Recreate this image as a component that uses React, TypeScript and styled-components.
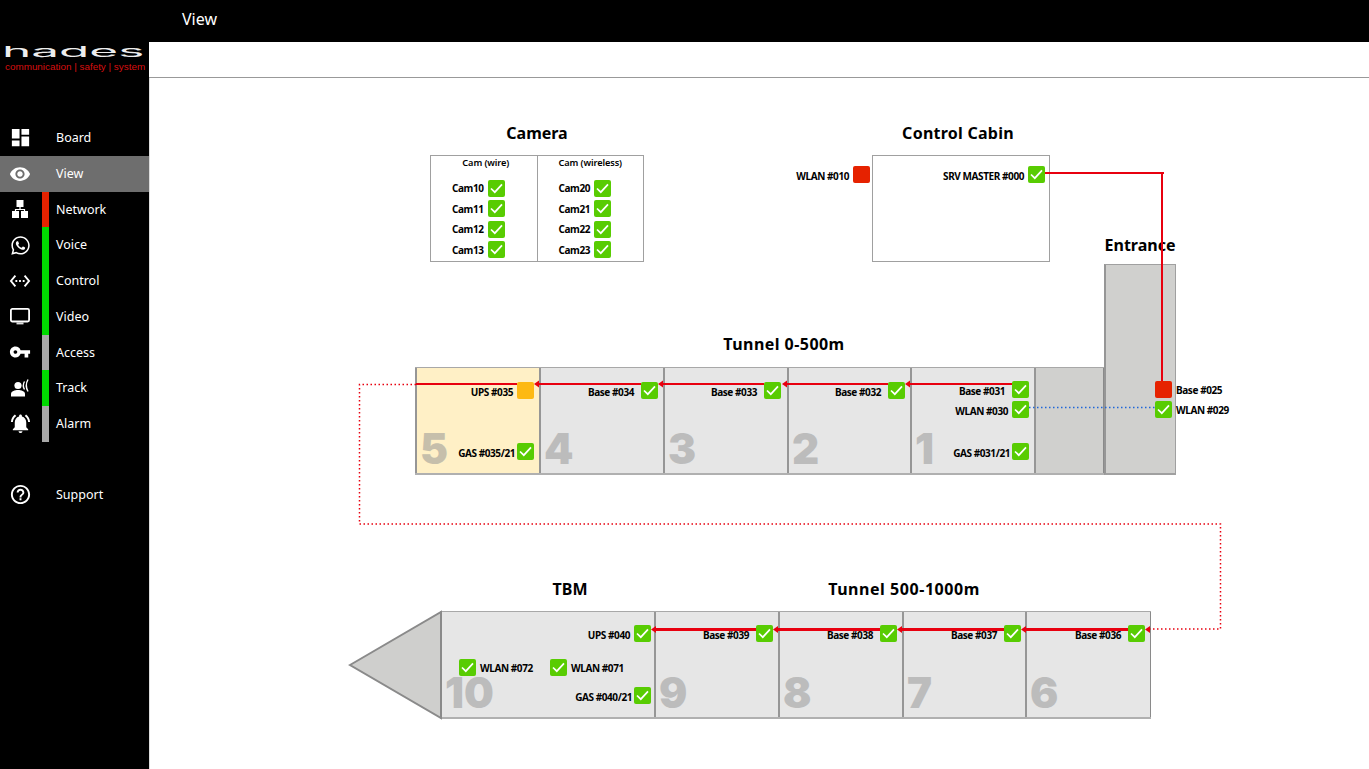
import React from 'react';
import styled, { createGlobalStyle } from 'styled-components';
import {
    MdDashboard,
    MdVisibility,
    MdSettingsEthernet,
    MdVpnKey,
    MdNotificationsActive,
    MdHelpOutline
} from 'react-icons/md';
import { FaWhatsapp } from 'react-icons/fa';

const CANVAS_X = 149;
const CANVAS_Y = 78;
const CANVAS_W = 1220;

const GREEN = '#58cc02';
const RED = '#e62200';
const AMBER = '#fdb913';
const WIRE = '#e8000f';

const GlobalStyle = createGlobalStyle`
    html, body {
        margin: 0;
        height: 100%;
        overflow: hidden;
        background: #fff;
        font-family: "Noto Sans", "Open Sans", sans-serif;
    }
`;

const Page = styled.div`
    display: flex;
    flex-direction: column;
    height: 100vh;
`;

const TopBar = styled.header`
    flex: 0 0 42px;
    background: #000;
    color: #fff;
    font-size: 16px;
    line-height: 38px;
    padding-left: 182px;
`;

const Body = styled.div`
    flex: 1;
    display: flex;
    min-height: 0;
`;

const Sidebar = styled.nav`
    flex: 0 0 149px;
    min-width: 0;
    background: #000;
    border-right: 1px solid #ddd;
    color: #fff;
`;

const Logo = styled.div`
    height: 78px;
    padding: 0 0 0 5px;
    box-sizing: border-box;
    overflow: hidden;
`;

const LogoMark = styled.div`
    font-family: "Inter", sans-serif;
    font-weight: 400;
    font-size: 15px;
    line-height: 16px;
    height: 15px;
    margin: 2px 0 0 -3px;
    color: #eee;
    transform: scale(3.3, 1);
    transform-origin: 0 50%;
`;

const LogoTag = styled.div`
    font-family: "Liberation Sans", Arial, sans-serif;
    font-size: 9.9px;
    line-height: 12px;
    margin-top: 2px;
    color: #d80f0f;
    white-space: nowrap;
`;

const MenuGroup = styled.div<{ $gap?: number }>`
    margin-top: ${props => props.$gap || 0}px;
`;

const MenuRow = styled.div<{ $active?: boolean }>`
    display: flex;
    align-items: stretch;
    height: 35.75px;
    background: ${props => props.$active ? '#6e6e6e' : 'transparent'};
`;

const MenuIcon = styled.div`
    flex: 0 0 42px;
    padding-right: 2px;
    box-sizing: border-box;
    display: flex;
    align-items: center;
    justify-content: center;
`;

const MenuStatus = styled.div<{ $color?: string }>`
    flex: 0 0 7px;
    background: ${props => props.$color || 'transparent'};
`;

const MenuLabel = styled.div`
    padding-left: 7px;
    font-size: 12.5px;
    line-height: 35px;
`;

const Content = styled.main`
    flex: 1;
    display: flex;
    flex-direction: column;
    min-width: 0;
`;

const Strip = styled.div`
    flex: 0 0 36px;
    box-sizing: border-box;
    border-bottom: 1px solid #999;
    margin-left: -1px;
    background: #fff;
`;

const Canvas = styled.div`
    position: relative;
    flex: 1;
    margin-left: -1px;
    color: #000;
`;

const Wires = styled.svg`
    position: absolute;
    left: 0;
    top: 0;
    width: 100%;
    height: 100%;
`;

const Title = styled.h2<{ $cx: number; $y: number; $spread?: number }>`
    position: absolute;
    left: ${props => props.$cx - CANVAS_X}px;
    top: ${props => props.$y - CANVAS_Y}px;
    transform: translate(-50%, -50%);
    margin: 0;
    font-size: 16px;
    line-height: 20px;
    font-weight: 700;
    letter-spacing: ${props => props.$spread || 0}px;
    white-space: nowrap;
`;

const CameraBox = styled.div`
    position: absolute;
    left: ${430 - CANVAS_X}px;
    top: ${155 - CANVAS_Y}px;
    width: 214px;
    height: 107px;
    box-sizing: border-box;
    border: 1px solid #a0a0a0;
    display: flex;
`;

const CameraColumn = styled.div`
    flex: 1;
    display: flex;
    flex-direction: column;
    padding-right: 32px;
    & + & {
        border-left: 1px solid #a0a0a0;
    }
`;

const CameraHead = styled.div<{ $shift: number }>`
    font-size: 9.2px;
    font-weight: 600;
    line-height: 13px;
    letter-spacing: -0.1px;
    margin: 0 -32px 9px ${props => props.$shift}px;
    text-align: center;
`;

const CameraRow = styled.div`
    display: flex;
    justify-content: flex-end;
    align-items: center;
    gap: 4px;
    height: 20.5px;
`;

const Label = styled.span<{ $drop: number }>`
    font-size: 10px;
    font-weight: 700;
    line-height: 12px;
    letter-spacing: -0.42px;
    white-space: nowrap;
    margin-top: ${props => props.$drop}px;
`;

const CabinBox = styled.div`
    position: absolute;
    left: ${872 - CANVAS_X}px;
    top: ${155 - CANVAS_Y}px;
    width: 178px;
    height: 107px;
    box-sizing: border-box;
    border: 1px solid #a0a0a0;
`;

const EntranceTower = styled.div`
    position: absolute;
    left: ${1104 - CANVAS_X}px;
    top: ${264 - CANVAS_Y}px;
    width: 72px;
    height: 211px;
    box-sizing: border-box;
    background: #d0d0ce;
    border: 1px solid #a0a0a0;
    border-bottom-width: 2px;
    border-left: 2px solid #969696;
`;

const CellRow = styled.div<{ $x: number; $y: number }>`
    position: absolute;
    left: ${props => props.$x - CANVAS_X}px;
    top: ${props => props.$y - CANVAS_Y}px;
    display: flex;
    height: 108px;
    box-sizing: border-box;
    border-top: 1px solid #a8a8a8;
    border-bottom: 2px solid #b0b0b0;
`;

const Cell = styled.div<{ $w: number; $bg?: string }>`
    width: ${props => props.$w}px;
    box-sizing: border-box;
    background: ${props => props.$bg || '#e6e6e6'};
    border-left: 2px solid #969696;
    display: flex;
    align-items: flex-end;
    padding: 0 0 9px 3px;
    &:last-child {
        border-right: 1px solid #8a8a8a;
    }
`;

const CellNumber = styled.span<{ $tint?: string }>`
    font-family: "Inter", "Liberation Sans", sans-serif;
    font-weight: 900;
    font-size: 42px;
    line-height: 31px;
    color: ${props => props.$tint || '#bcbcbc'};
`;

const Node = styled.div<{ $x: number; $y: number; $side: 'left' | 'right'; $gap: number }>`
    position: absolute;
    top: ${props => props.$y - CANVAS_Y}px;
    display: flex;
    align-items: center;
    gap: ${props => props.$gap}px;
    ${props => props.$side === 'left'
        ? `right: ${CANVAS_W - (props.$x + 17 - CANVAS_X)}px;`
        : `left: ${props.$x - CANVAS_X}px; flex-direction: row-reverse;`}
`;

const StatusBox = styled.div<{ $color: string }>`
    flex: 0 0 17px;
    width: 17px;
    height: 17px;
    border-radius: 2px;
    background: ${props => props.$color};
    display: flex;
    align-items: center;
    justify-content: center;
`;

const Check = () => (
    <svg width="13" height="11" viewBox="0 0 13 11">
        <path d="M1 5.5 L4.8 9.2 L12 1.4" fill="none" stroke="#fff" strokeWidth="1.7" />
    </svg>
);

const Status: React.FC<{ color?: string }> = ({ color = GREEN }) => (
    <StatusBox $color={color}>{color === GREEN && <Check />}</StatusBox>
);

const NetworkIcon = () => (
    <svg width="18" height="18" viewBox="0 0 18 18" style={{ display: 'block' }}>
        <rect x="5.5" y="0" width="7" height="7" fill="#fff" />
        <rect x="1" y="11" width="7" height="7" fill="#fff" />
        <rect x="10" y="11" width="7" height="7" fill="#fff" />
        <path d="M9 7 V9.5 M4.5 11 V9.5 H13.5 V11" fill="none" stroke="#fff" strokeWidth="1.2" />
    </svg>
);

const MonitorIcon = () => (
    <svg width="20" height="17" viewBox="0 0 20 17" style={{ display: 'block' }}>
        <rect x="0.9" y="0.9" width="18.2" height="12.6" rx="1.5" fill="none" stroke="#fff" strokeWidth="1.8" />
        <rect x="6.5" y="14.4" width="7" height="2" fill="#ddd" />
    </svg>
);

const TrackIcon = () => (
    <svg width="20" height="18" viewBox="0 0 20 18" style={{ display: 'block' }}>
        <circle cx="8" cy="6.5" r="3.6" fill="#fff" />
        <path d="M1 17.5 V15 C1 12 5 11 8 11 C11 11 15 12 15 15 V17.5 Z" fill="#fff" />
        <path d="M14.5 2.5 C13 5 13 8 14.5 10.5" fill="none" stroke="#fff" strokeWidth="1.4" />
        <path d="M18 0.5 C16 4 16 9 18 12.5" fill="none" stroke="#fff" strokeWidth="1.4" />
    </svg>
);

const iconStyle = { display: 'block' };

const menu = [
    { label: 'Board', icon: <MdDashboard size={23} style={iconStyle} /> },
    { label: 'View', icon: <MdVisibility size={22} style={iconStyle} />, active: true },
    { label: 'Network', icon: <NetworkIcon />, status: RED },
    { label: 'Voice', icon: <FaWhatsapp size={21} style={iconStyle} />, status: '#00d800' },
    { label: 'Control', icon: <MdSettingsEthernet size={22} style={iconStyle} />, status: '#00d800' },
    { label: 'Video', icon: <MonitorIcon />, status: '#00d800' },
    { label: 'Access', icon: <MdVpnKey size={22} style={iconStyle} />, status: '#a8a8a8' },
    { label: 'Track', icon: <TrackIcon />, status: '#00d800' },
    { label: 'Alarm', icon: <MdNotificationsActive size={23} style={iconStyle} />, status: '#a8a8a8' }
];

const cameras = [
    { head: 'Cam (wire)', shift: 4, names: ['Cam10', 'Cam11', 'Cam12', 'Cam13'] },
    { head: 'Cam (wireless)', shift: 0, names: ['Cam20', 'Cam21', 'Cam22', 'Cam23'] }
];

interface NodeItem {
    label: string;
    x: number;
    y: number;
    gap?: number;
    side?: 'left' | 'right';
    color?: string;
    drop?: number;
}

const nodes: NodeItem[] = [
    { label: 'WLAN #010', x: 853, y: 166, color: RED, drop: 3 },
    { label: 'SRV MASTER #000', x: 1028, y: 166, drop: 3 },
    { label: 'UPS #035', x: 517, y: 382, color: AMBER },
    { label: 'Base #034', x: 641, y: 382, gap: 7 },
    { label: 'Base #033', x: 764, y: 382, gap: 7 },
    { label: 'Base #032', x: 888, y: 382, gap: 7 },
    { label: 'Base #031', x: 1012, y: 381, gap: 7 },
    { label: 'WLAN #030', x: 1012, y: 401 },
    { label: 'GAS #035/21', x: 517, y: 443, gap: 2 },
    { label: 'GAS #031/21', x: 1012, y: 443, gap: 2 },
    { label: 'Base #025', x: 1155, y: 381, side: 'right', color: RED, drop: 0 },
    { label: 'WLAN #029', x: 1155, y: 401, side: 'right', drop: 0 },
    { label: 'UPS #040', x: 634, y: 625 },
    { label: 'Base #039', x: 756, y: 625, gap: 7 },
    { label: 'Base #038', x: 880, y: 625, gap: 7 },
    { label: 'Base #037', x: 1004, y: 625, gap: 7 },
    { label: 'Base #036', x: 1128, y: 625, gap: 7 },
    { label: 'WLAN #072', x: 459, y: 659, side: 'right', drop: 0 },
    { label: 'WLAN #071', x: 550, y: 659, side: 'right', drop: 0 },
    { label: 'GAS #040/21', x: 634, y: 687, gap: 2 }
];

// arrows run right to left, the head sits on x2
const arrows = [
    { x1: 641, x2: 534, y: 384, w: 2 },
    { x1: 764, x2: 658, y: 384, w: 2 },
    { x1: 888, x2: 782, y: 384, w: 2 },
    { x1: 1012, x2: 905, y: 384, w: 2 },
    { x1: 756, x2: 651, y: 629.5, w: 3 },
    { x1: 880, x2: 773, y: 629.5, w: 3 },
    { x1: 1004, x2: 897, y: 629.5, w: 3 },
    { x1: 1128, x2: 1021, y: 629.5, w: 3 }
];

const App: React.FC = () => {
    return (
        <Page>
            <GlobalStyle />
            <TopBar>View</TopBar>
            <Body>
                <Sidebar>
                    <Logo>
                        <LogoMark>hades</LogoMark>
                        <LogoTag>communication | safety | system</LogoTag>
                    </Logo>
                    <MenuGroup>
                        {menu.map(item => (
                            <MenuRow key={item.label} $active={item.active}>
                                <MenuIcon>{item.icon}</MenuIcon>
                                <MenuStatus $color={item.status} />
                                <MenuLabel>{item.label}</MenuLabel>
                            </MenuRow>
                        ))}
                    </MenuGroup>
                    <MenuGroup $gap={35}>
                        <MenuRow>
                            <MenuIcon><MdHelpOutline size={23} style={iconStyle} /></MenuIcon>
                            <MenuStatus />
                            <MenuLabel>Support</MenuLabel>
                        </MenuRow>
                    </MenuGroup>
                </Sidebar>
                <Content>
                    <Strip />
                    <Canvas>
                        <Title $cx={537} $y={133}>Camera</Title>
                        <Title $cx={958} $y={133} $spread={0.25}>Control Cabin</Title>
                        <Title $cx={1140} $y={245}>Entrance</Title>
                        <Title $cx={784} $y={344} $spread={0.45}>Tunnel 0-500m</Title>
                        <Title $cx={570} $y={589}>TBM</Title>
                        <Title $cx={904} $y={589} $spread={0.55}>Tunnel 500-1000m</Title>

                        <CameraBox>
                            {cameras.map(col => (
                                <CameraColumn key={col.head}>
                                    <CameraHead $shift={col.shift}>{col.head}</CameraHead>
                                    {col.names.map(name => (
                                        <CameraRow key={name}>
                                            <Label $drop={0}>{name}</Label>
                                            <Status />
                                        </CameraRow>
                                    ))}
                                </CameraColumn>
                            ))}
                        </CameraBox>
                        <CabinBox />

                        <EntranceTower />
                        <CellRow $x={415} $y={367}>
                            <Cell $w={124} $bg="#fff0c6"><CellNumber $tint="#c6bfab">5</CellNumber></Cell>
                            <Cell $w={124}><CellNumber>4</CellNumber></Cell>
                            <Cell $w={124}><CellNumber>3</CellNumber></Cell>
                            <Cell $w={123}><CellNumber>2</CellNumber></Cell>
                            <Cell $w={124}><CellNumber>1</CellNumber></Cell>
                            <Cell $w={70} $bg="#d0d0ce" />
                        </CellRow>
                        <CellRow $x={440} $y={611}>
                            <Cell $w={214}><CellNumber>10</CellNumber></Cell>
                            <Cell $w={124}><CellNumber>9</CellNumber></Cell>
                            <Cell $w={124}><CellNumber>8</CellNumber></Cell>
                            <Cell $w={123}><CellNumber>7</CellNumber></Cell>
                            <Cell $w={126}><CellNumber>6</CellNumber></Cell>
                        </CellRow>

                        <Wires viewBox={`${CANVAS_X} ${CANVAS_Y} ${CANVAS_W} 691`}>
                            <polygon points="350,665 441,612 441,718" fill="#cfcfcd" stroke="#8a8a8a" strokeWidth="2" />
                            <path d="M1045 173 H1164 M1162 173 V382" fill="none" stroke={WIRE} strokeWidth="2" />
                            <path d="M416 384 H517" fill="none" stroke={WIRE} strokeWidth="2" />
                            <path
                                d="M416 384.5 H359.5 V524 H1220.5 V629 H1149"
                                fill="none"
                                stroke={WIRE}
                                strokeWidth="1.5"
                                strokeDasharray="1.5 2.5"
                            />
                            <path d="M1029 407.5 H1155" fill="none" stroke="#1f66d8" strokeWidth="1.5" strokeDasharray="1.5 2.5" />
                            <polygon points="1145,629.5 1150,626 1150,633" fill={WIRE} />
                            {arrows.map(a => (
                                <g key={a.x1}>
                                    <path d={`M${a.x1} ${a.y} H${a.x2 + 3}`} stroke={WIRE} strokeWidth={a.w} />
                                    <polygon
                                        points={`${a.x2},${a.y} ${a.x2 + 5},${a.y - 3.5} ${a.x2 + 5},${a.y + 3.5}`}
                                        fill={WIRE}
                                    />
                                </g>
                            ))}
                        </Wires>

                        {nodes.map(n => (
                            <Node key={n.label} $x={n.x} $y={n.y} $side={n.side || 'left'} $gap={n.gap ?? 4}>
                                <Label $drop={n.drop ?? 2}>{n.label}</Label>
                                <Status color={n.color} />
                            </Node>
                        ))}
                    </Canvas>
                </Content>
            </Body>
        </Page>
    );
};

export default App;
